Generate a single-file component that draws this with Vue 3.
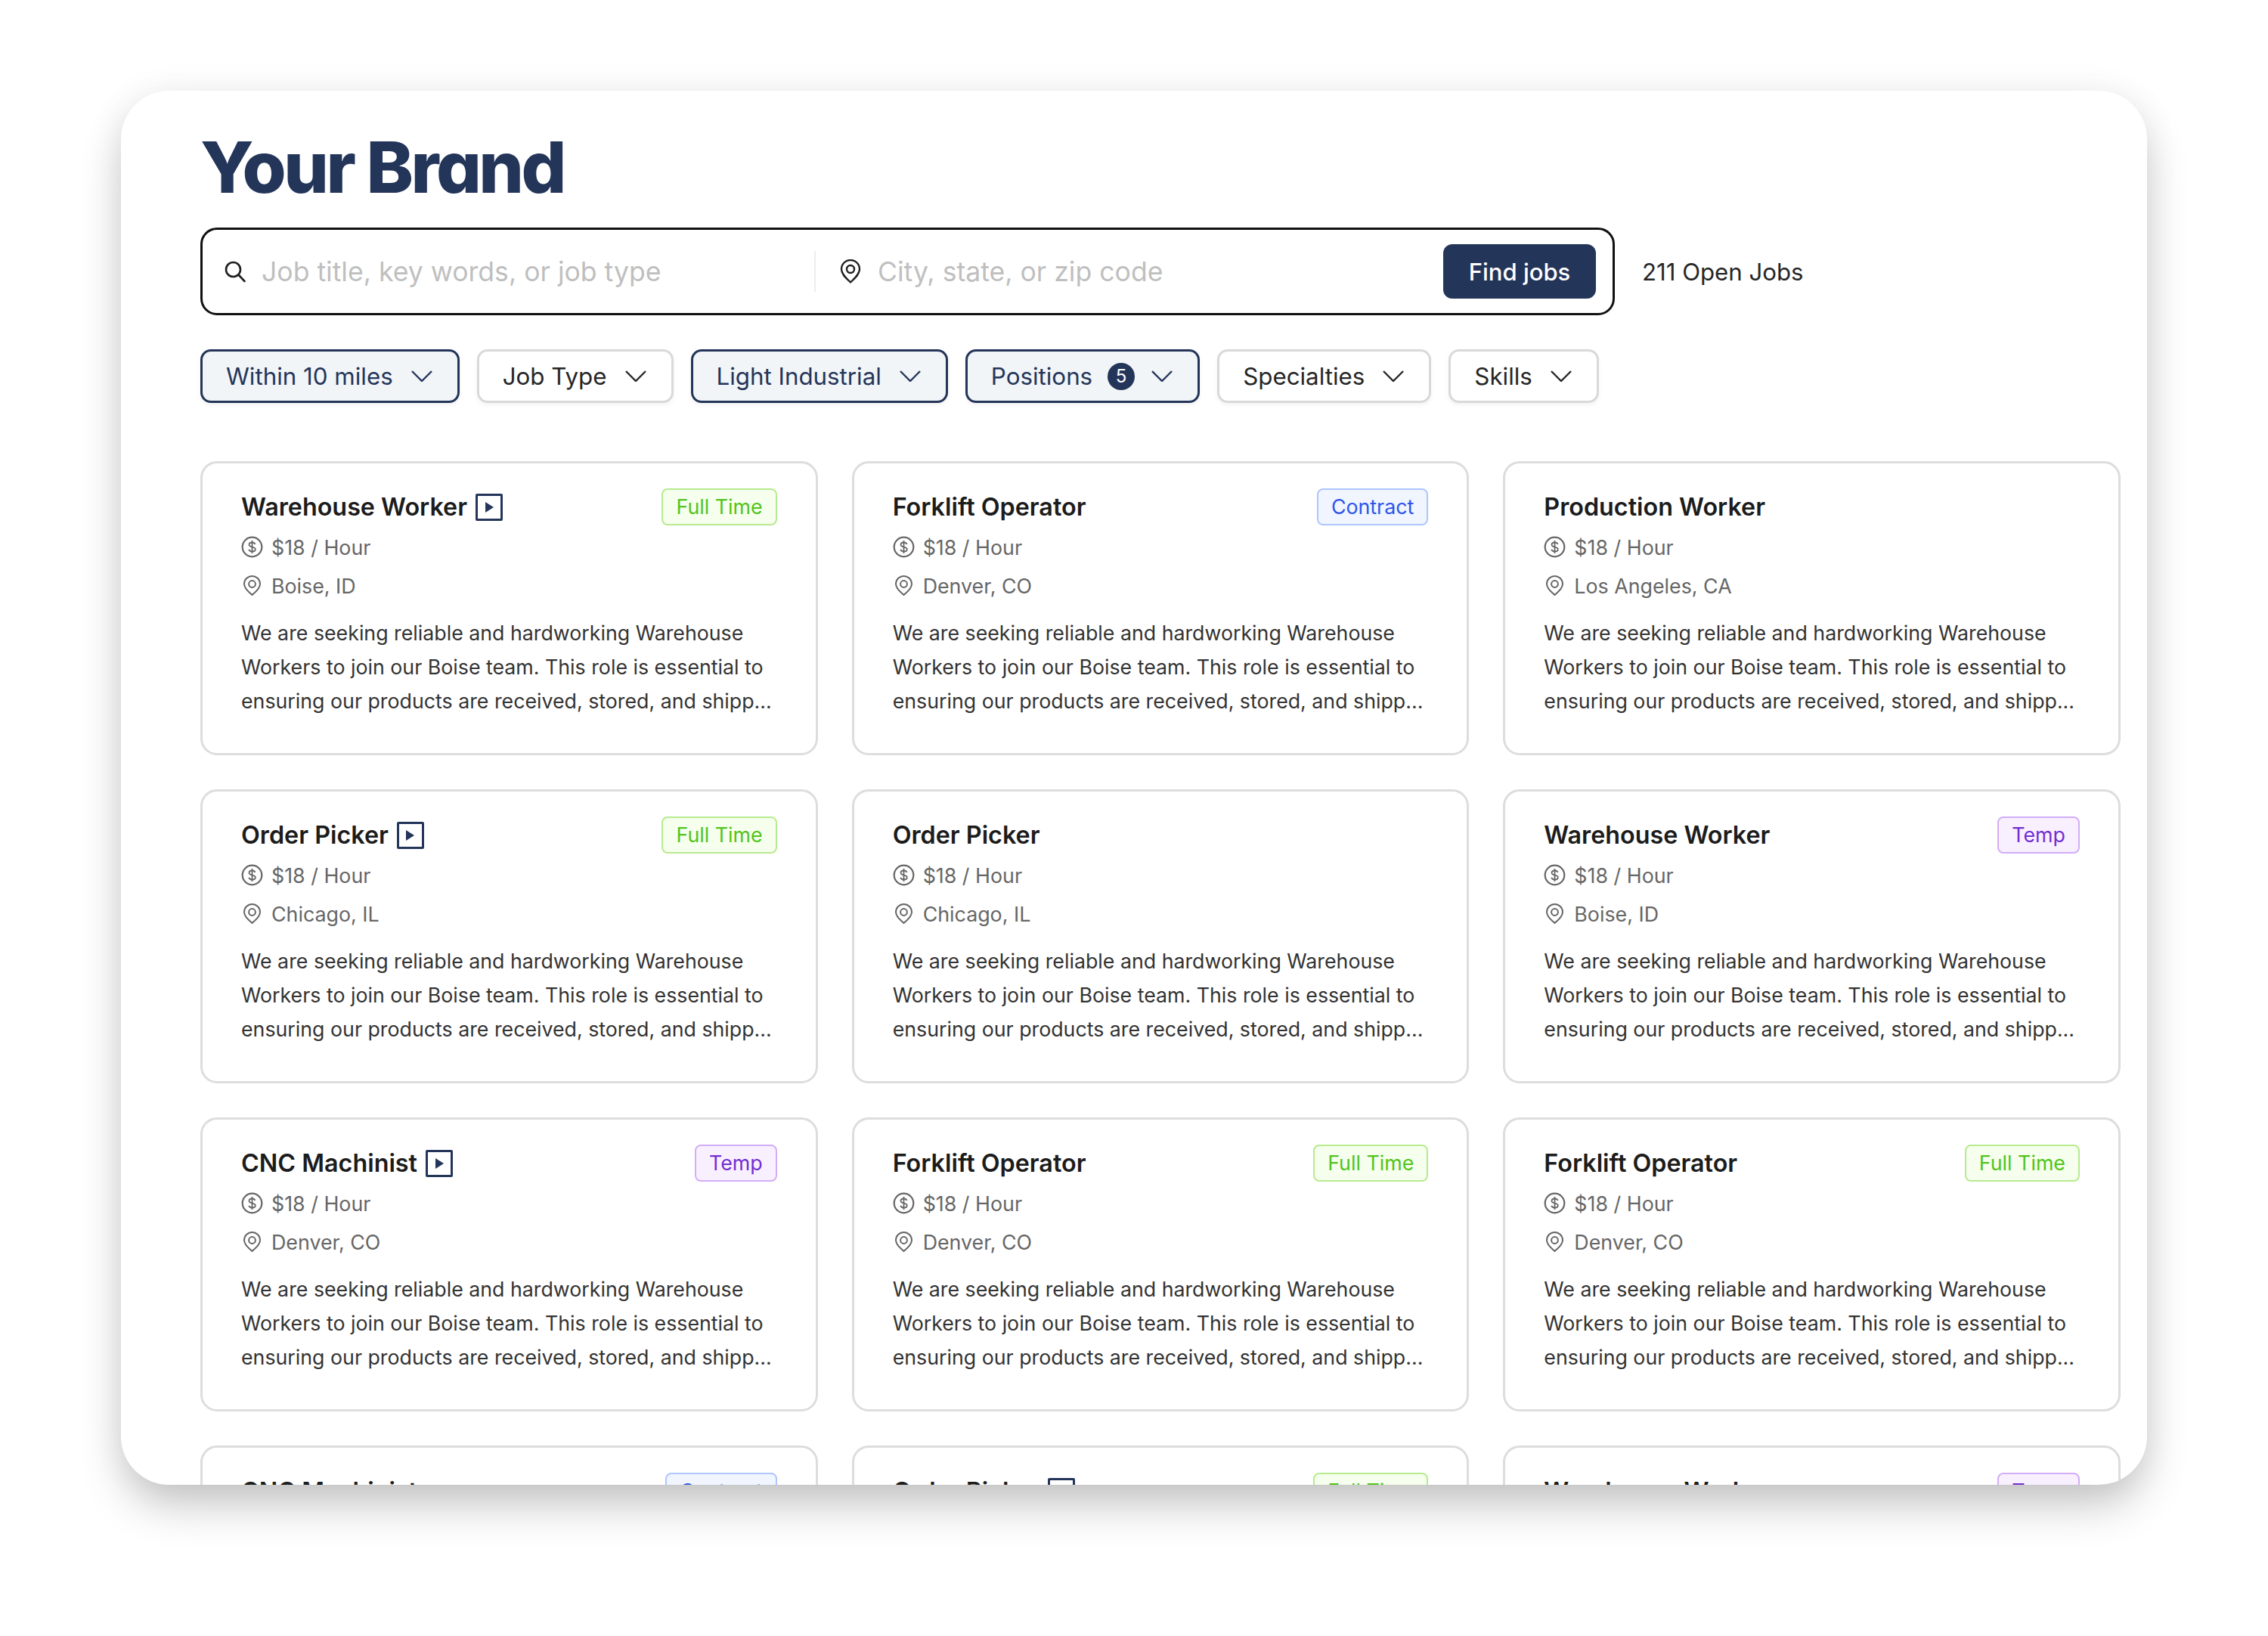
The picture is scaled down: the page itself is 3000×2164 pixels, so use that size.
<template>
  <div class="page">
    <div class="window">
      <h1 class="logo">Your Brand</h1>

      <div class="search-row">
        <div class="search-bar">
          <div class="field field-what">
            <svg class="search-icon" viewBox="0 0 30 30" fill="none" stroke="#1f1f1f" stroke-width="2.6" stroke-linecap="round">
              <circle cx="12.5" cy="12.5" r="9.5" />
              <path d="M19.5 19.5L27.5 28" />
            </svg>
            <span class="placeholder">Job title, key words, or job type</span>
          </div>
          <div class="field field-where">
            <svg class="pin-lg" viewBox="0 0 28 32" fill="none" stroke="#1f1f1f" stroke-width="2.4" stroke-linejoin="round">
              <path d="M14 30.5C9 25.5 2 20 2 13a12 12 0 0 1 24 0c0 7-7 12.500-12 17.500z" />
              <circle cx="14" cy="13" r="5" />
            </svg>
            <span class="placeholder">City, state, or zip code</span>
          </div>
          <button class="find-btn">Find jobs</button>
        </div>
        <span class="open-jobs">211 Open Jobs</span>
      </div>

      <div class="filters">
        <button v-for="f in filters" :key="f.label" class="filter" :class="{ active: f.active }">
          <span>{{ f.label }}</span>
          <span v-if="f.count" class="count">{{ f.count }}</span>
          <svg class="chevron" viewBox="0 0 28 15" fill="none" stroke="currentColor" stroke-width="2.4">
            <path d="M1 1L14 14L27 1" />
          </svg>
        </button>
      </div>

      <div class="grid">
        <div v-for="(job, i) in jobs" :key="i" class="card">
          <div class="card-head">
            <span class="title">{{ job.title }}</span>
            <span v-if="job.video" class="play">
              <svg viewBox="0 0 11 14" fill="#24355a"><path d="M0 0l11 7-11 7z" /></svg>
            </span>
            <span v-if="job.type" class="tag" :class="job.type.toLowerCase().replace(' ', '-')">{{ job.type }}</span>
          </div>
          <div class="meta">
            <svg class="meta-icon" viewBox="0 0 29 29" fill="none" stroke="#666" stroke-width="2.2">
              <circle cx="14.5" cy="14.5" r="12.800" />
              <path d="M18.500 11c-.5-1.500-2-2.500-4-2.500-2.300 0-4 1.200-4 3 0 4.300 8.300 2 8.300 6 0 1.800-1.800 3-4.300 3-2.200 0-3.800-1-4.300-2.700M14.500 6v17" stroke-width="1.800" />
            </svg>
            <span>$18 / Hour</span>
          </div>
          <div class="meta">
            <svg class="meta-icon" viewBox="0 0 29 29" fill="none" stroke="#666" stroke-width="2" stroke-linejoin="round">
              <path d="M14.500 27C11 23.500 4 19 4 12.500a10.500 10.500 0 0 1 21 0c0 6.500-7 11-10.500 14.500z" />
              <circle cx="14.500" cy="12.500" r="4.400" />
            </svg>
            <span>{{ job.city }}</span>
          </div>
          <p class="desc">
            We are seeking reliable and hardworking Warehouse<br />
            Workers to join our Boise team. This role is essential to<br />
            ensuring our products are received, stored, and shipp...
          </p>
        </div>
      </div>
    </div>
  </div>
</template>

<script setup>
const filters = [
  { label: 'Within 10 miles', active: true },
  { label: 'Job Type' },
  { label: 'Light Industrial', active: true },
  { label: 'Positions', active: true, count: 5 },
  { label: 'Specialties' },
  { label: 'Skills' }
]

const jobs = [
  { title: 'Warehouse Worker', video: true, type: 'Full Time', city: 'Boise, ID' },
  { title: 'Forklift Operator', type: 'Contract', city: 'Denver, CO' },
  { title: 'Production Worker', city: 'Los Angeles, CA' },
  { title: 'Order Picker', video: true, type: 'Full Time', city: 'Chicago, IL' },
  { title: 'Order Picker', city: 'Chicago, IL' },
  { title: 'Warehouse Worker', type: 'Temp', city: 'Boise, ID' },
  { title: 'CNC Machinist', video: true, type: 'Temp', city: 'Denver, CO' },
  { title: 'Forklift Operator', type: 'Full Time', city: 'Denver, CO' },
  { title: 'Forklift Operator', type: 'Full Time', city: 'Denver, CO' },
  { title: 'CNC Machinist', type: 'Contract', city: 'Denver, CO' },
  { title: 'Order Picker', video: true, type: 'Full Time', city: 'Chicago, IL' },
  { title: 'Warehouse Worker', type: 'Temp', city: 'Boise, ID' }
]
</script>

<style>
body { background: #fff; }
</style>

<style scoped>
.page { padding: 120px 160px 200px; font-family: Inter, "Liberation Sans", sans-serif; }
.window { height: 1844px; box-sizing: border-box; padding: 40px 35px 0 105px; background: #fff; border-radius: 64px; overflow: hidden; box-shadow: 0 30px 60px -6px rgba(0,0,0,.24), 0 0 50px rgba(0,0,0,.05); }

.logo { margin: 0; height: 141px; font-size: 94px; line-height: 122px; font-weight: 800; letter-spacing: -3.500px; color: #24355a; font-feature-settings: "cv11"; }

.search-row { display: flex; align-items: center; gap: 36px; }
.search-bar { display: flex; align-items: center; width: 1871px; height: 116px; box-sizing: border-box; border: 3px solid #111; border-radius: 22px; padding: 0 22px 0 28px; }
.field { display: flex; align-items: center; height: 54px; }
.field-what { width: 781px; gap: 20px; border-right: 2px solid #eee; }
.field-where { flex: 1; padding-left: 32px; gap: 22px; }
.search-icon { width: 30px; height: 30px; flex-shrink: 0; }
.pin-lg { width: 28px; height: 32px; flex-shrink: 0; }
.placeholder { font-size: 35.600px; color: #bfbfbf; }
.find-btn { width: 202px; height: 72px; border: none; border-radius: 12px; background: #24355a; color: #fff; font: 500 31px Inter, sans-serif; }
.open-jobs { font-size: 31.200px; color: #262626; padding-top: 1px; }

.filters { display: flex; gap: 23px; margin-top: 45px; }
.filter { display: flex; align-items: center; gap: 24px; height: 71px; padding: 0 33px 0 31px; box-sizing: border-box; border: 3px solid #d9d9d9; border-radius: 14px; background: #fff; color: #262626; font: 400 31.300px Inter, sans-serif; box-shadow: 0 3px 6px rgba(0,0,0,.05); }
.filter.active { background: #f2f5f7; border-color: #24355a; color: #24355a; }
.chevron { width: 28px; height: 15px; }
.count { width: 36px; height: 36px; margin: 0 -2px 0 -4px; border-radius: 50%; background: #24355a; color: #fff; font-size: 24px; line-height: 36px; text-align: center; }

.grid { display: grid; grid-template-columns: repeat(3, 1fr); grid-auto-rows: 389px; gap: 45px; margin-top: 77px; }
.card { box-sizing: border-box; padding: 33px 51px 0; border: 3px solid #ddd; border-radius: 22px; }
.card-head { display: flex; align-items: center; height: 49px; margin-bottom: 3px; }
.title { font-size: 32.300px; font-weight: 600; color: #1c1c1c; }
.play { display: flex; align-items: center; justify-content: center; width: 36px; height: 36px; margin-left: 11px; box-sizing: border-box; border: 3.500px solid #24355a; border-radius: 2px; }
.play svg { width: 11px; height: 14px; }
.tag { margin-left: auto; height: 49px; padding: 0 17px; box-sizing: border-box; border: 2.500px solid; border-radius: 8px; font-size: 26.800px; line-height: 44px; }
.full-time { color: #52c41a; background: #f6ffed; border-color: #b7eb8f; }
.contract { color: #2f54eb; background: #f0f5ff; border-color: #adc6ff; }
.temp { color: #722ed1; background: #f9f0ff; border-color: #d3adf7; }

.meta { display: flex; align-items: center; gap: 11px; height: 51px; font-size: 26.800px; color: #666; }
.meta-icon { width: 29px; height: 29px; flex-shrink: 0; }
.desc { margin: 15px 0 0; font-size: 26.750px; line-height: 45px; color: #333; white-space: nowrap; }
</style>
